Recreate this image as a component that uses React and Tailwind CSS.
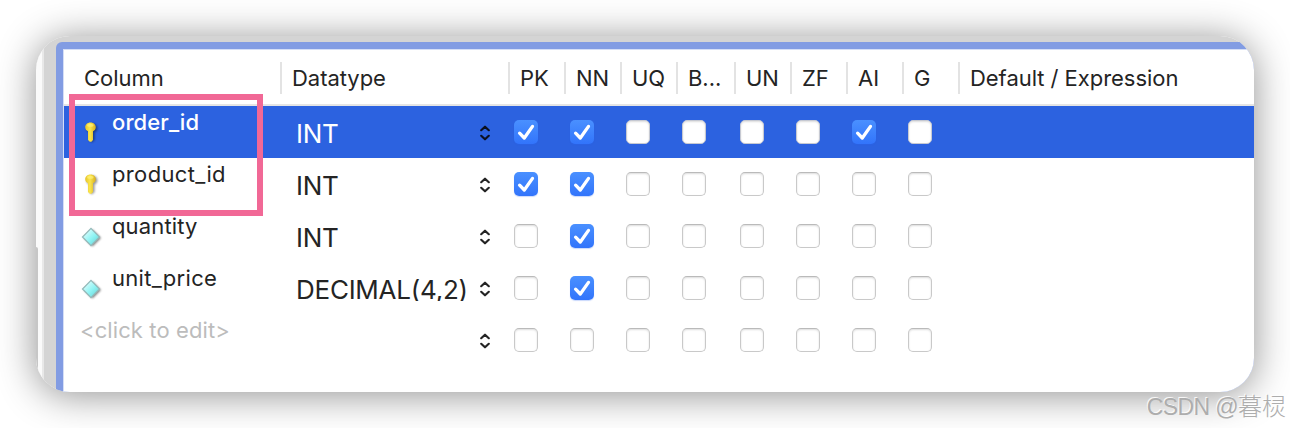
const flags = [
    { label: "PK", width: "w-14" },
    { label: "NN", width: "w-14" },
    { label: "UQ", width: "w-14" },
    { label: "B...", width: "w-[58px]" },
    { label: "UN", width: "w-14" },
    { label: "ZF", width: "w-14" },
    { label: "AI", width: "w-14" },
    { label: "G", width: "w-14" },
]

const rows = [
    { name: "order_id", type: "INT", icon: "key", checked: ["PK", "NN", "AI"], selected: true, tracking: "tracking-[0.1px]" },
    { name: "product_id", type: "INT", icon: "key", checked: ["PK", "NN"], tracking: "tracking-[0.35px]" },
    { name: "quantity", type: "INT", icon: "diamond", checked: ["NN"], tracking: "tracking-[0.15px]" },
    { name: "unit_price", type: "DECIMAL(4,2)", icon: "diamond", checked: ["NN"], tracking: "tracking-[0.3px]" },
    { name: "<click to edit>", type: "", icon: null, checked: [], tracking: "tracking-[0.1px]" },
]

const KeyIcon = () => (
    <svg className="w-6 h-6 shrink-0" viewBox="0 0 24 24">
        <defs>
            <linearGradient id="gold" x1="0" y1="0" x2="1" y2="0">
                <stop offset="0" stopColor="#e6c42c" />
                <stop offset="0.45" stopColor="#fbe64c" />
                <stop offset="1" stopColor="#d6ae20" />
            </linearGradient>
            <filter id="soft" x="-50%" y="-50%" width="200%" height="200%">
                <feGaussianBlur stdDeviation="0.9" />
            </filter>
        </defs>
        <path d="M11 3C7.500 3 5.500 5.300 5.500 8c0 2 1.200 3.400 2.700 4v7.500l2.600 2.500 2.800-2.500V12c1.700-.7 2.800-2 2.800-4 0-2.700-2-5-5.400-5z" fill="#000" opacity="0.4" filter="url(#soft)" transform="translate(1 0.600)" />
        <path d="M10.500 2.500C7 2.500 5.200 4.800 5.200 7.300c0 2 1.200 3.300 2.800 4V20l1.800 1.800h1.600L13 20v-8.700c1.600-.7 2.800-2 2.800-4 0-2.500-1.900-4.800-5.300-4.800z" fill="url(#gold)" />
        <ellipse cx="10.300" cy="5.200" rx="3.200" ry="1.500" fill="#fff27a" opacity="0.7" />
    </svg>
)

const DiamondIcon = () => (
    <svg className="w-6 h-6 shrink-0" viewBox="0 0 24 24">
        <defs>
            <linearGradient id="aqua" x1="0" y1="0" x2="1" y2="1">
                <stop offset="0.200" stopColor="#d3fbfb" />
                <stop offset="0.550" stopColor="#8ef4f4" />
                <stop offset="0.850" stopColor="#6fd8da" />
            </linearGradient>
            <filter id="haze" x="-50%" y="-50%" width="200%" height="200%">
                <feGaussianBlur stdDeviation="1.200" />
            </filter>
        </defs>
        <path d="M12.500 4.500L21 13l-8.500 8.500L4 13z" fill="#000" opacity="0.5" filter="url(#haze)" />
        <path d="M11 3.400l8.500 8.600-8.500 8.600L2.500 12z" fill="url(#aqua)" stroke="#94b9b9" strokeWidth="1.300" />
    </svg>
)

const Stepper = () => (
    <svg className="w-3 h-4 shrink-0" viewBox="0 0 12 16" fill="none" stroke="currentColor" strokeWidth="2.200" strokeLinecap="round" strokeLinejoin="round">
        <path d="M2.200 5.200L6 1.700l3.800 3.500M2.200 10.800L6 14.300l3.800-3.500" />
    </svg>
)

const Checkbox = ({ checked, selected }) => {
    if (checked) {
        return (
            <span className="block w-6 h-6 rounded-[5px] bg-linear-to-b from-[#4a90ff] to-[#3274fb] shadow-[0_1px_1px_rgba(40,100,240,0.25)]">
                <svg className="w-6 h-6" viewBox="0 0 24 24" fill="none" stroke="#fff" strokeWidth="3.300" strokeLinecap="round" strokeLinejoin="round">
                    <path d="M5.600 13.200L10.300 18 18.500 6.400" />
                </svg>
            </span>
        )
    }
    return (
        <span
            className={`block w-6 h-6 rounded-[5px] border bg-white shadow-[inset_0_1px_2px_rgba(0,0,0,0.14)] ${
                selected ? "border-[#c6c9d2]" : "border-[#c9c9c9] border-t-[#bababa]"
            }`}
        />
    )
}

const HeaderCell = ({ className = "", children }) => (
    <div className={`h-8 shrink-0 border-r-2 border-[#e3e3e3] flex items-center whitespace-nowrap ${className}`}>{children}</div>
)

const Row = ({ row }) => (
    <div className={`flex h-13 ${row.selected ? "bg-[#2c62e0] text-white" : "text-[#242424]"}`}>
        {/* Name */}
        <div className="w-[218px] shrink-0 flex">
            {row.icon ? (
                <>
                    <div className={row.icon === "key" ? "pt-[14px] pl-[15.5px]" : "pt-[15px] pl-4"}>
                        {row.icon === "key" ? <KeyIcon /> : <DiamondIcon />}
                    </div>
                    <span className={`text-[22px] leading-8 ${row.icon === "key" ? "pl-[8.5px]" : "pl-2"} ${row.tracking} ${row.selected ? "font-medium" : ""}`}>{row.name}</span>
                </>
            ) : (
                <span className={`pl-4 text-[22px] leading-8 text-[#bcbcbc] ${row.tracking}`}>{row.name}</span>
            )}
        </div>

        {/* Datatype */}
        <div className="w-[228px] shrink-0 flex items-center pl-[14px] pr-[19px] pt-0.5">
            <div className="flex-1 h-6 overflow-hidden text-[26px] leading-[26px] tracking-[-0.25px] whitespace-nowrap">{row.type}</div>
            <span className={row.selected ? "text-[#0b1020]" : ""}><Stepper /></span>
        </div>

        {/* Flags */}
        {flags.map((flag) => (
            <div key={flag.label} className={`${flag.width} shrink-0 pl-1 pt-[14px]`}>
                <Checkbox checked={row.checked.includes(flag.label)} selected={row.selected} />
            </div>
        ))}
    </div>
)

const App = () => {
    return (
        <div className="relative w-[1290px] h-[428px] overflow-hidden bg-white p-9 font-[Inter,sans-serif]">
            <div className="w-[1218px] h-[356px] rounded-[34px] shadow-[0_3px_38px_rgba(0,0,0,0.44)]">
                <div className="flex w-full h-full overflow-hidden rounded-[34px] bg-[#d4d4d4]">
                    {/* Edge of the sidebar */}
                    <div className="w-2 shrink-0 bg-[#fafafa] border-r-2 border-[#e8e8e8] flex items-end">
                        <div className="w-0.5 h-[145px] rounded-tr-sm bg-[#c6c6c6]" />
                    </div>

                    {/* Table */}
                    <div className="flex-1 ml-3 mt-1.5 rounded-tl-[6px] bg-[#829ce3] pl-[7px] pt-[7px]">
                        <div className="h-full border-t border-l border-[#d5def6] bg-white">
                            <div className="h-14 flex items-center pt-0.5 border-b-2 border-[#e5e5e5] text-[22px] tracking-[-0.04px] text-[#242424]">
                                <HeaderCell className="w-[218px] pl-5">Column</HeaderCell>
                                <HeaderCell className="w-[228px] pl-[10px]">Datatype</HeaderCell>
                                {flags.map((flag) => (
                                    <HeaderCell key={flag.label} className={`${flag.width} pl-[10px]`}>{flag.label}</HeaderCell>
                                ))}
                                <div className="pl-[10px]">Default / Expression</div>
                            </div>
                            {rows.map((row) => (
                                <Row key={row.name} row={row} />
                            ))}
                        </div>
                    </div>
                </div>
            </div>

            {/* Highlight around the key columns */}
            <div className="absolute left-[69px] top-[94px] w-[194px] h-[122px] border-[6px] border-[#f16896]" />

            {/* Watermark */}
            <div className="absolute right-1 bottom-[5px] text-[24px] leading-8 text-[#adadad] whitespace-nowrap font-['Liberation_Sans','Noto_Sans_CJK_SC',sans-serif] font-light [text-shadow:-1px_-1px_0_rgba(255,255,255,0.85)]">
                <span className="text-[23px] tracking-[-0.6px]">CSDN @</span>暮棂
            </div>
        </div>
    )
}

export default App
